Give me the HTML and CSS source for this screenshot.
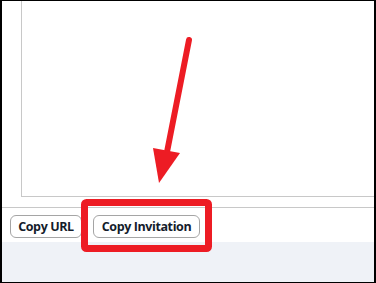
FILE: index.html
```html
<!DOCTYPE html>
<html>
<head>
    <title>Share Meeting</title>
    <link rel="stylesheet" href="styles.css">
</head>
<body>
    <div class="frame">
        <div class="editor">
            <div class="textbox"></div>
        </div>
        <div class="toolbar">
            <button class="btn btn-url">Copy URL</button>
            <button class="btn btn-invite">Copy Invitation</button>
        </div>
        <div class="footer"></div>

        <!-- annotation drawn over the screenshot -->
        <svg class="annot" width="376" height="283" viewBox="0 0 376 283">
            <line x1="189" y1="40" x2="167" y2="152" stroke="#ed1c24" stroke-width="6" stroke-linecap="round"/>
            <polygon points="153,148 180,153 159,183" fill="#ed1c24"/>
            <rect x="84.5" y="202.5" width="124" height="46" rx="2" fill="none" stroke="#ed1c24" stroke-width="7"/>
        </svg>
    </div>
</body>
</html>
```

FILE: styles.css
```css
body {
    margin: 0;
    font-family: "Open Sans", Arial, sans-serif;
}
.frame {
    position: relative;
    width: 376px;
    height: 283px;
    box-sizing: border-box;
    border: 1px solid #000;
    border-left-width: 2px;
    border-right-width: 2px;
    display: flex;
    flex-direction: column;
    background: #fff;
}
.editor {
    padding: 0 0 10px 19px;
    border-bottom: 1px solid #c8c8c8;
}
.textbox {
    height: 195px;
    border-left: 1px solid #c8c8c8;
    border-bottom: 1px solid #c8c8c8;
}
.toolbar {
    display: flex;
    gap: 11px;
    padding: 7px 0 0 8px;
    height: 34px;
    box-sizing: border-box;
}
.btn {
    height: 23px;
    padding: 0;
    border: 1px solid #a5a5a5;
    border-radius: 6px;
    background: #fff;
    color: #141c2b;
    font-family: "Open Sans", Arial, sans-serif;
    font-size: 12.5px;
    font-weight: 700;
    letter-spacing: -0.4px;
    text-align: center;
}
.btn-url {
    width: 72px;
}
.btn-invite {
    width: 107px;
}
.footer {
    flex: 1;
    background: #eff2f7;
}
.annot {
    position: absolute;
    left: -2px;
    top: -1px;
    pointer-events: none;
}
```
